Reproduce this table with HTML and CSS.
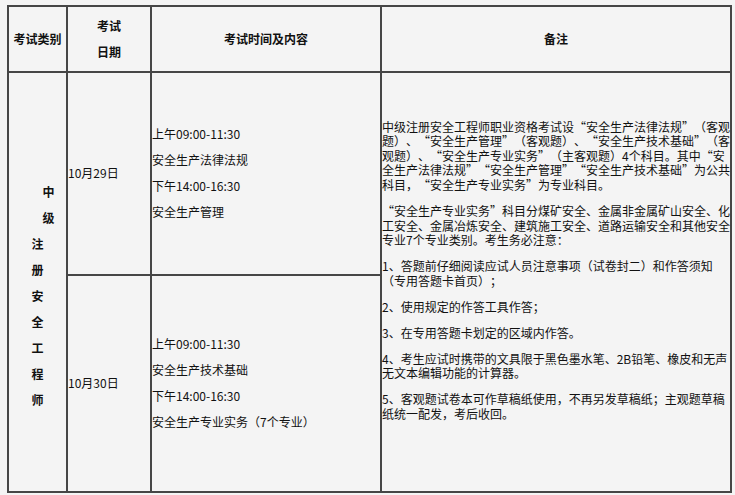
FILE: index.html
```html
<!DOCTYPE html>
<html lang="zh-CN">
<head>
<meta charset="utf-8">
<title>考试安排</title>
<link rel="stylesheet" href="styles.css">
</head>
<body>
<table class="exam">
  <colgroup>
    <col class="c1"><col class="c2"><col class="c3"><col class="c4">
  </colgroup>
  <thead>
    <tr class="head">
      <th><p>考试类别</p></th>
      <th><p>考试</p><p>日期</p></th>
      <th><p>考试时间及内容</p></th>
      <th><p>备注</p></th>
    </tr>
  </thead>
  <tbody>
    <tr class="r1">
      <td rowspan="2" class="cat">
        <p class="shift">中</p><p class="shift">级</p><p>注</p><p>册</p><p>安</p><p>全</p><p>工</p><p>程</p><p>师</p>
      </td>
      <td class="date"><p>10月29日</p></td>
      <td class="sess"><p>上午09:00-11:30</p><p>安全生产法律法规</p><p>下午14:00-16:30</p><p>安全生产管理</p></td>
      <td rowspan="2" class="note">
        <p>中级注册安全工程师职业资格考试设“安全生产法律法规”（客观题）、“安全生产管理”（客观题）、“安全生产技术基础”（客观题）、“安全生产专业实务”（主客观题）<span class="num">4</span>个科目。其中“安全生产法律法规”“安全生产管理”“安全生产技术基础”为公共科目，“安全生产专业实务”为专业科目。</p>
        <p>“安全生产专业实务”科目分煤矿安全、金属非金属矿山安全、化工安全、金属冶炼安全、建筑施工安全、道路运输安全和其他安全专业<span class="num">7</span>个专业类别。考生务必注意：</p>
        <p><span class="num">1</span>、答题前仔细阅读应试人员注意事项（试卷封二）和作答须知（专用答题卡首页）；</p>
        <p><span class="num">2</span>、使用规定的作答工具作答；</p>
        <p><span class="num">3</span>、在专用答题卡划定的区域内作答。</p>
        <p><span class="num">4</span>、考生应试时携带的文具限于黑色墨水笔、<span class="num">2B</span>铅笔、橡皮和无声无文本编辑功能的计算器。</p>
        <p><span class="num">5</span>、客观题试卷本可作草稿纸使用，不再另发草稿纸；主观题草稿纸统一配发，考后收回。</p>
      </td>
    </tr>
    <tr class="r2">
      <td class="date"><p>10月30日</p></td>
      <td class="sess"><p>上午09:00-11:30</p><p>安全生产技术基础</p><p>下午14:00-16:30</p><p>安全生产专业实务（7个专业）</p></td>
    </tr>
  </tbody>
</table>
</body>
</html>
```
FILE: styles.css
```css
html, body {
  margin: 0;
  padding: 0;
  background: #f4f4f4;
}
body {
  font-family: "Noto Sans CJK SC", "Noto Sans", sans-serif;
  font-size: 12px;
  color: #111;
  text-spacing-trim: space-all;
}
.exam {
  border-collapse: separate;
  border-spacing: 0;
  table-layout: fixed;
  width: 725px;
  margin: 5px 0 0 7px;
  border-left: 2px solid #464646;
  border-top: 2px solid #464646;
}
.c1 { width: 59px; }
.c2 { width: 84px; }
.c3 { width: 230px; }
.c4 { width: 350px; }
.exam th,
.exam td {
  box-sizing: border-box;
  padding: 0;
  border-right: 2px solid #464646;
  border-bottom: 2px solid #464646;
  vertical-align: middle;
  text-align: left;
  font-weight: normal;
  line-height: 14.6px;
}
.exam p {
  margin: 0;
}
.exam p + p {
  margin-top: 11.4px;
}
.exam th {
  font-weight: bold;
  text-align: center;
}
.head th { height: 66px; }
.r1 td { height: 203px; }
.r2 td { height: 217px; }
.cat {
  text-align: center !important;
  font-weight: bold !important;
  padding-top: 28px !important;
}
.cat .shift {
  padding-left: 22px;
}
.note {
  padding-bottom: 23px !important;
}
.note p {
  font-feature-settings: "fwid" 1;
}
.note .num {
  font-feature-settings: normal;
}
```
